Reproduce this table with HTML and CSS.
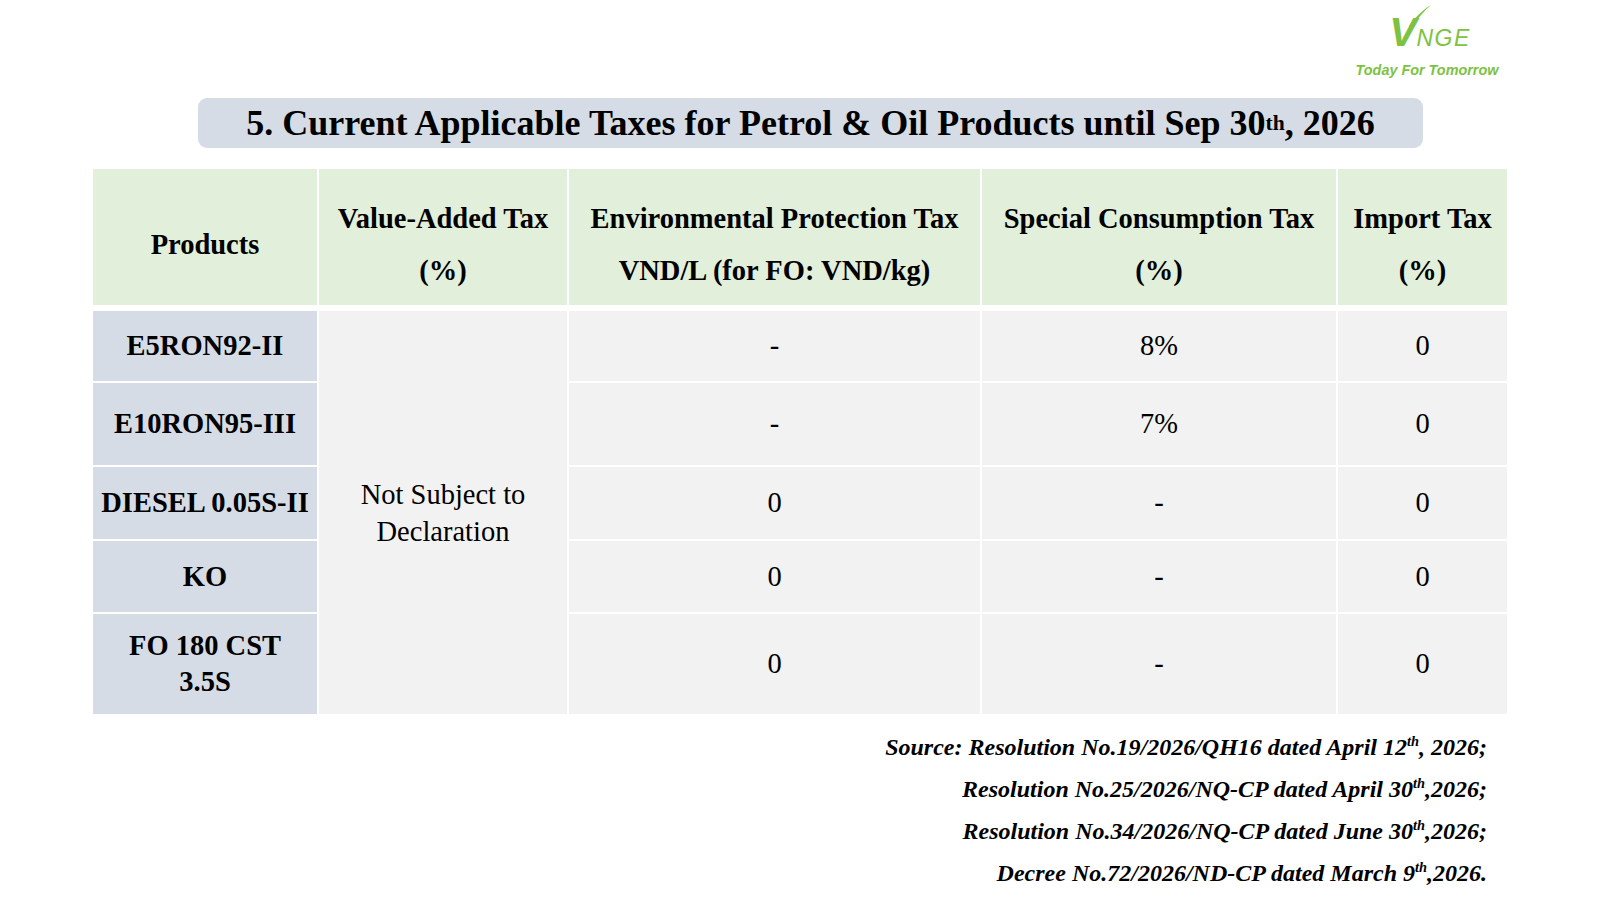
FILE: index.html
```html
<!DOCTYPE html>
<html lang="en">
<head>
<meta charset="utf-8">
<title>Current Applicable Taxes</title>
<link rel="stylesheet" href="styles.css">
</head>
<body>
<div class="slide">
  <header class="top">
    <div class="logo">
      <div class="mark">
        <span class="v">V<svg class="swoosh" viewBox="0 0 24 24" width="24" height="24"><path d="M1 22 C7 14 13 7 23 1 C15 8 9 15 4 23 Z" fill="#7dc243"/></svg></span><span class="nge">NGE</span>
      </div>
      <div class="tagline">Today For Tomorrow</div>
    </div>
  </header>

  <h1 class="title-bar">5. Current Applicable Taxes for Petrol &amp; Oil Products until Sep 30<sup>th</sup>, 2026</h1>

  <div class="table">
    <div class="thead">
      <div class="cell th">Products</div>
      <div class="cell th">Value-Added Tax<br>(%)</div>
      <div class="cell th">Environmental Protection Tax<br>VND/L (for FO: VND/kg)</div>
      <div class="cell th">Special Consumption Tax<br>(%)</div>
      <div class="cell th">Import Tax<br>(%)</div>
    </div>
    <div class="tbody">
      <div class="cell vat">Not Subject to<br>Declaration</div>

      <div class="cell prod">E5RON92-II</div>
      <div class="cell">-</div>
      <div class="cell">8%</div>
      <div class="cell">0</div>

      <div class="cell prod">E10RON95-III</div>
      <div class="cell">-</div>
      <div class="cell">7%</div>
      <div class="cell">0</div>

      <div class="cell prod">DIESEL 0.05S-II</div>
      <div class="cell">0</div>
      <div class="cell">-</div>
      <div class="cell">0</div>

      <div class="cell prod">KO</div>
      <div class="cell">0</div>
      <div class="cell">-</div>
      <div class="cell">0</div>

      <div class="cell prod">FO 180 CST<br>3.5S</div>
      <div class="cell">0</div>
      <div class="cell">-</div>
      <div class="cell">0</div>
    </div>
  </div>

  <div class="sources">
    <p>Source: Resolution No.19/2026/QH16 dated April 12<sup>th</sup>, 2026;</p>
    <p>Resolution No.25/2026/NQ-CP dated April 30<sup>th</sup>,2026;</p>
    <p>Resolution No.34/2026/NQ-CP dated June 30<sup>th</sup>,2026;</p>
    <p>Decree No.72/2026/ND-CP dated March 9<sup>th</sup>,2026.</p>
  </div>
</div>
</body>
</html>
```

FILE: styles.css
```css
* {
  box-sizing: border-box;
  margin: 0;
  padding: 0;
}

html, body {
  width: 1600px;
  height: 900px;
  background: #ffffff;
  overflow: hidden;
}

body {
  font-family: "Liberation Serif", "Times New Roman", serif;
  color: #000000;
}

.slide {
  width: 1600px;
  height: 900px;
  display: flex;
  flex-direction: column;
}

/* ---------- logo ---------- */
.top {
  height: 98px;
  display: flex;
  justify-content: flex-end;
  padding-right: 98px;
}

.logo {
  width: 150px;
  display: flex;
  flex-direction: column;
  align-items: center;
  padding-top: 12px;
}

.mark {
  display: flex;
  align-items: baseline;
  height: 40px;
  color: #7dc243;
  font-family: "Liberation Sans", Arial, sans-serif;
  font-style: italic;
  padding-left: 6px;
}

.v {
  position: relative;
  font-size: 41px;
  font-weight: bold;
  line-height: 40px;
}

.swoosh {
  position: absolute;
  left: 19px;
  top: -8px;
}

.nge {
  font-family: "Liberation Sans", Arial, sans-serif;
  font-size: 23px;
  letter-spacing: 1.5px;
  line-height: 40px;
}

.tagline {
  margin-top: 10px;
  color: #7dc243;
  font-family: "Liberation Sans", Arial, sans-serif;
  font-style: italic;
  font-weight: bold;
  font-size: 14.4px;
  line-height: 16px;
  white-space: nowrap;
}

/* ---------- title ---------- */
.title-bar {
  margin-left: 198px;
  width: 1225px;
  height: 50px;
  background: #d6dce5;
  border-radius: 9px;
  display: flex;
  align-items: center;
  justify-content: center;
  font-size: 36px;
  font-weight: bold;
  line-height: 50px;
  white-space: nowrap;
}

sup {
  font-size: 0.6em;
  line-height: 0;
  vertical-align: 0.62em;
}

/* ---------- table ---------- */
.table {
  margin: 21px 0 0 93px;
  width: 1414px;
}

.thead,
.tbody {
  display: grid;
  grid-template-columns: 224px 248px 411px 354px 169px;
  column-gap: 2px;
}

.thead {
  height: 136px;
}

.tbody {
  margin-top: 6px;
  grid-template-rows: 70px 82px 72px 71px 100px;
  row-gap: 2px;
}

.cell {
  display: flex;
  align-items: center;
  justify-content: center;
  text-align: center;
  font-size: 28.5px;
  line-height: 1.25;
  background: #f2f2f2;
}

.th {
  background: #e2efda;
  font-weight: bold;
  line-height: 52px;
  padding-top: 16px;
}

.prod {
  background: #d6dce5;
  font-weight: bold;
}

.vat {
  grid-column: 2;
  grid-row: 1 / 6;
  line-height: 37px;
}

/* ---------- sources ---------- */
.sources {
  margin-top: 12px;
  padding-right: 113px;
  text-align: right;
  font-style: italic;
  font-weight: bold;
  font-size: 24px;
  line-height: 42px;
}
```
